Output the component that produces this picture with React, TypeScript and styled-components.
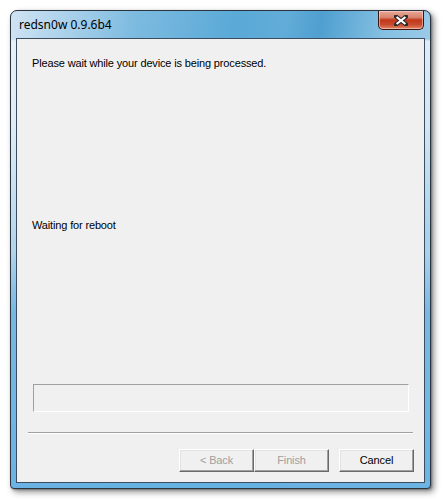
import React from "react";
import styled, { createGlobalStyle } from "styled-components";

const Global = createGlobalStyle`
  html, body { margin: 0; padding: 0; background: #ffffff; }
  body { width: 443px; height: 501px; overflow: hidden; }
`;

const Page = styled.div`
  padding: 10px 0 0 10px;
`;

const Window = styled.div`
  width: 421px;
  height: 479px;
  box-sizing: border-box;
  border: 1px solid #2b3540;
  border-radius: 7px 7px 4px 4px;
  display: flex;
  flex-direction: column;
  padding: 0 5px 5px 5px;
  box-shadow: 3px 3px 6px rgba(0, 0, 0, 0.45), 1px 1px 2px rgba(0, 0, 0, 0.3);
  background:
    linear-gradient(180deg, rgba(255,255,255,0) 0px, rgba(255,255,255,0) 28px, rgba(235,242,248,0.85) 30px, rgba(235,242,248,0.7) 110px, rgba(235,242,248,0) 230px),
    linear-gradient(180deg, rgba(110,180,226,0) 0px, rgba(110,180,226,0) 240px, rgba(110,180,226,0.85) 300px, rgba(104,178,228,0.95) 100%),
    linear-gradient(100deg, #cfe4f3 0%, #a9d0ea 12%, #7dbbe0 25%, #5aa9d7 45%, #62acd8 55%, #4f9fd0 62%, #86c0e2 75%, #a6d0eb 90%, #c8e1f1 100%);
  background-color: #7ebce2;
`;

const TitleBar = styled.div`
  height: 27px;
  display: flex;
  align-items: flex-start;
  justify-content: space-between;
`;

const Title = styled.div`
  font-family: "Noto Sans", "Open Sans", sans-serif;
  font-size: 12px;
  color: #000;
  padding: 6px 0 0 3px;
  line-height: 16px;
`;

const CloseButton = styled.div`
  width: 46px;
  height: 19px;
  margin-right: 1px;
  box-sizing: border-box;
  border: 1px solid #3a1610;
  border-top: none;
  border-radius: 0 0 5px 5px;
  background: linear-gradient(180deg, #e8a89a 0%, #d9856f 35%, #c2371c 50%, #c84a2c 75%, #e0846a 100%);
  box-shadow: inset 0 0 0 1px rgba(255, 220, 210, 0.55);
  display: flex;
  align-items: center;
  justify-content: center;
`;

const Client = styled.div`
  flex: 1;
  border: 1px solid #3b4d5e;
  background: #f0f0f0;
  display: flex;
  flex-direction: column;
  font-family: "Liberation Sans", Arial, sans-serif;
  font-size: 11px;
  letter-spacing: -0.15px;
  color: #000;
`;

const Text = styled.div<{ $top: number }>`
  margin: ${(p) => p.$top}px 0 0 15px;
  line-height: 13px;
`;

const Progress = styled.div`
  margin: 152px 0 0 16px;
  width: 376px;
  height: 28px;
  box-sizing: border-box;
  border: 1px solid;
  border-color: #a0a0a0 #ffffff #ffffff #a0a0a0;
`;

const Separator = styled.div`
  margin: 20px 0 0 11px;
  width: 385px;
  height: 0;
  border-top: 1px solid #a0a0a0;
  border-bottom: 1px solid #ffffff;
`;

const ButtonRow = styled.div`
  margin: 15px 10px 0 0;
  display: flex;
  justify-content: flex-end;
`;

const Button = styled.div<{ $disabled?: boolean; $gap?: number }>`
  width: 75px;
  height: 23px;
  box-sizing: border-box;
  margin-left: ${(p) => p.$gap ?? 0}px;
  border: 1px solid;
  border-color: #ffffff #696969 #696969 #ffffff;
  box-shadow: inset -1px -1px 0 #a0a0a0, inset 1px 1px 0 #e3e3e3;
  background: #f0f0f0;
  display: flex;
  align-items: center;
  justify-content: center;
  color: ${(p) => (p.$disabled ? "#a0a0a0" : "#000000")};
  padding-bottom: 1px;
`;

const CloseGlyph = () => (
  <svg width="14" height="11" viewBox="0 0 14 11">
    <path
      d="M2 1.5 L12 9.5 M12 1.5 L2 9.5"
      stroke="#2a2a2a"
      strokeWidth="4.2"
      strokeLinecap="square"
      fill="none"
    />
    <path
      d="M2.6 2 L11.4 9 M11.4 2 L2.6 9"
      stroke="#ffffff"
      strokeWidth="2.2"
      strokeLinecap="butt"
      fill="none"
    />
  </svg>
);

export default function App() {
  return (
    <>
      <Global />
      <Page>
        <Window>
          <TitleBar>
            <Title>redsn0w 0.9.6b4</Title>
            <CloseButton>
              <CloseGlyph />
            </CloseButton>
          </TitleBar>
          <Client>
            <Text $top={18}>Please wait while your device is being processed.</Text>
            <Text $top={149}>Waiting for reboot</Text>
            <Progress />
            <Separator />
            <ButtonRow>
              <Button $disabled>&lt; Back</Button>
              <Button $disabled>Finish</Button>
              <Button $gap={10}>Cancel</Button>
            </ButtonRow>
          </Client>
        </Window>
      </Page>
    </>
  );
}
